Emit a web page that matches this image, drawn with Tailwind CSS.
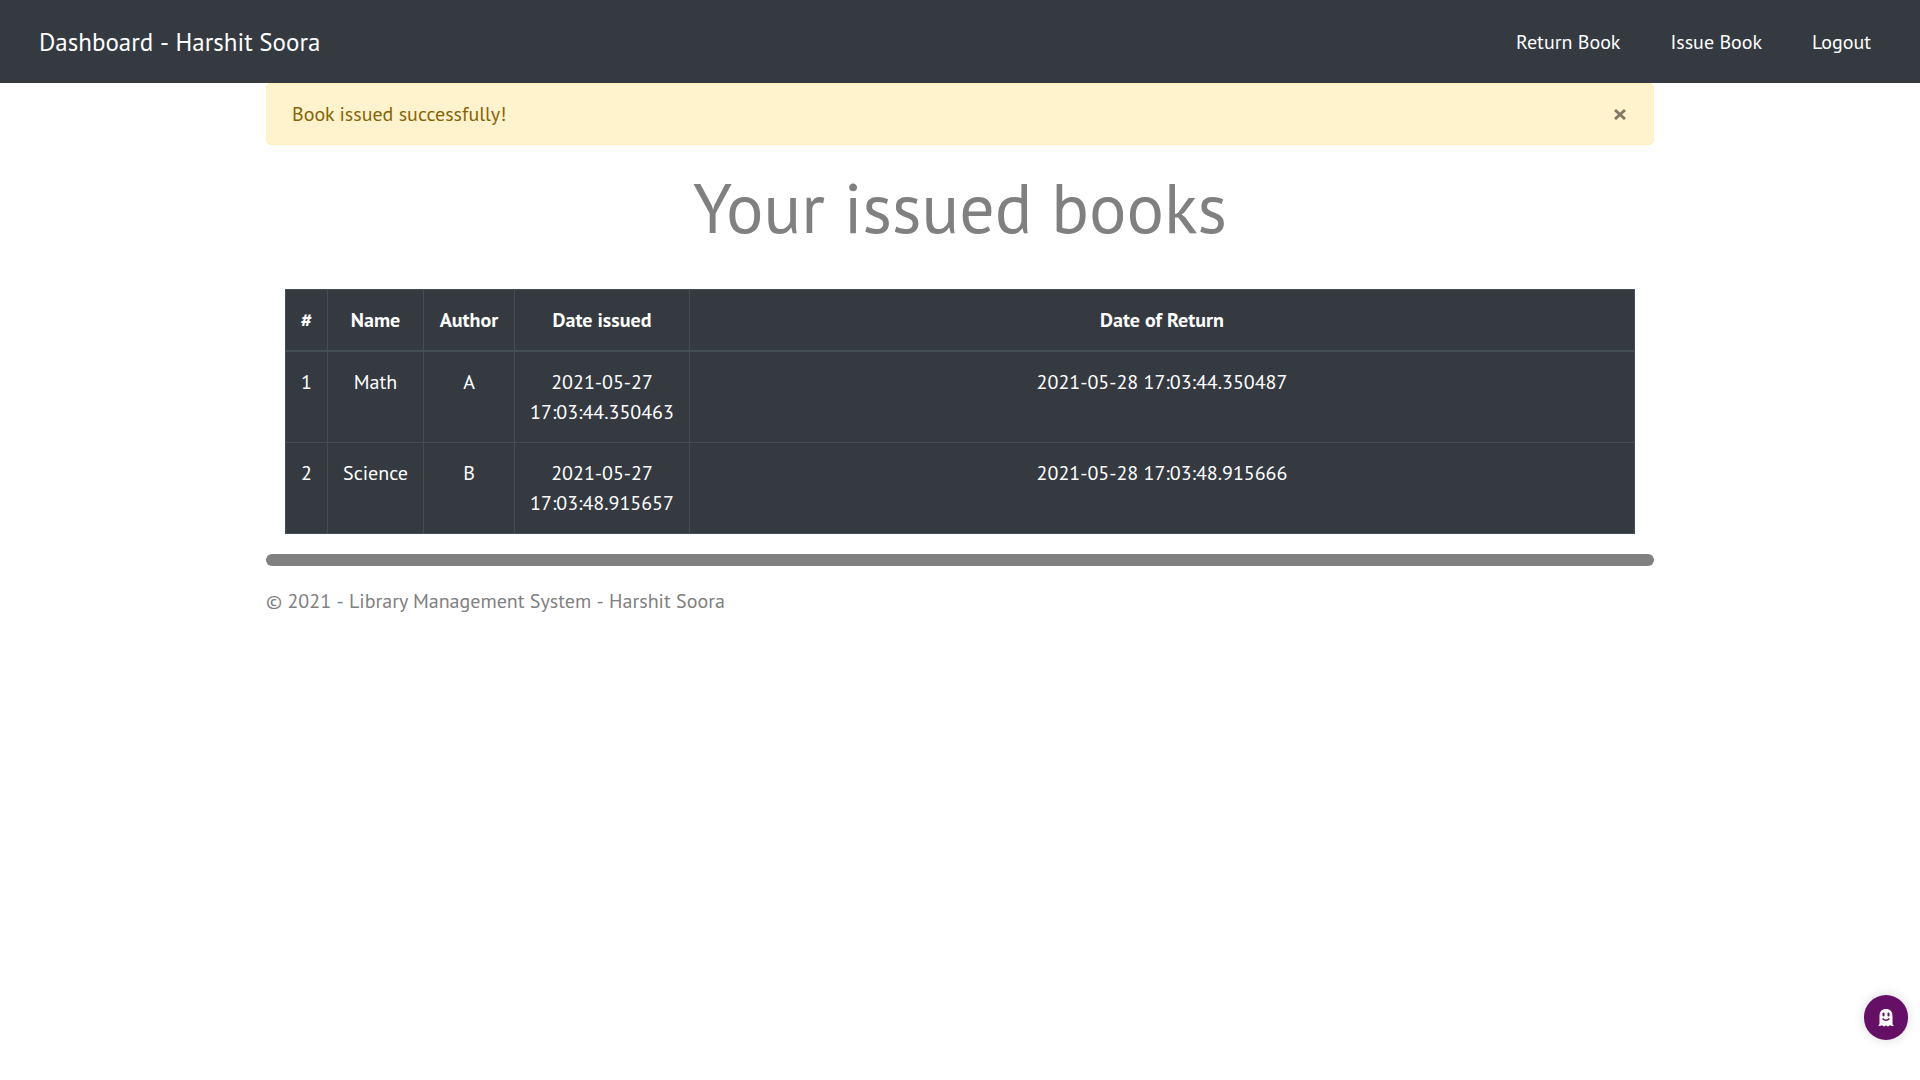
<!DOCTYPE html>
<html lang="en">
<head>
<meta charset="utf-8">
<title>Library Management System</title>
<script src="https://cdn.jsdelivr.net/npm/@tailwindcss/browser@4"></script>
</head>
<body class="min-h-screen bg-white font-['PT_Sans','Noto_Sans',sans-serif] text-[20px]/[30px] text-[#808080]">
<nav class="flex h-[83px] items-center justify-between bg-[#343a40] pr-[49px] pl-[39px] text-white">
  <a href="#" class="text-[25px]/[38px]">Dashboard<span class="[font-kerning:none]"> - </span>Harshit Soora</a>
  <div class="flex gap-[50px]">
    <a href="#">Return Book</a>
    <a href="#">Issue Book</a>
    <a href="#">Logout</a>
  </div>
</nav>
<main class="mx-auto max-w-[1388px]">
  <div role="alert" class="flex items-center justify-between rounded-[5px] border border-[#ffeeba] bg-[#fff3cd] py-[15px] pr-[23px] pl-[25px] text-[#856404]">
    <span>Book issued successfully!</span>
    <button type="button" aria-label="Close" class="flex h-[30px] w-5 items-center justify-center">
      <svg class="size-3" viewBox="0 0 12 12" fill="none" stroke="#807a67" stroke-width="3"><path d="M1 2L11 11M11 2L1 11"/></svg>
    </button>
  </div>
  <h1 class="mt-5 text-center text-[70px]/[84px]">Your issued books</h1>
  <div class="px-[19px] pt-10">
    <table class="w-full border-collapse border border-[#454d55] bg-[#343a40] text-center text-white">
      <thead>
        <tr class="*:border *:border-b-2 *:border-[#454d55] *:px-[14px] *:py-[15px] *:font-bold">
          <th scope="col" class="w-[42px]">#</th>
          <th scope="col" class="w-24">Name</th>
          <th scope="col" class="w-[91px]">Author</th>
          <th scope="col" class="w-[175px]">Date issued</th>
          <th scope="col">Date of Return</th>
        </tr>
      </thead>
      <tbody>
        <tr class="align-top *:border *:border-[#454d55] *:px-[14px] *:py-[15px]">
          <td>1</td><td>Math</td><td>A</td><td>2021-05-27 17:03:44.350463</td><td>2021-05-28 17:03:44.350487</td>
        </tr>
        <tr class="align-top *:border *:border-[#454d55] *:px-[14px] *:py-[15px]">
          <td>2</td><td>Science</td><td>B</td><td>2021-05-27 17:03:48.915657</td><td>2021-05-28 17:03:48.915666</td>
        </tr>
      </tbody>
    </table>
  </div>
  <hr class="mt-5 h-3 rounded-full border-0 bg-[#808080]">
  <footer class="mt-5">© 2021<span class="[font-kerning:none]"> - </span>Library Management System<span class="[font-kerning:none]"> - </span>Harshit Soora</footer>
</main>
<button type="button" aria-label="Open assistant" class="fixed right-3 bottom-10 flex h-[45px] w-11 items-center justify-center rounded-full bg-[#660f66] shadow-[0_0_12px_rgba(0,0,0,0.15)]">
  <svg class="h-[18px] w-4" viewBox="0 0 16 18"><path fill="#fff" d="M1.500 7C1.500 2.500 4 0 8 0s6.500 2.500 6.500 7v7c0 1.500.500 2 1.500 2.500-1.500.700-3 .500-4-.500-1 1.800-3 1.800-4 .300-1 1.500-3 1.500-4-.300-1 1-2.500 1.200-4 .500 1-.500 1.500-1 1.500-2.500z"/><rect x="4.500" y="3.500" width="2" height="4" rx="1" fill="#660f66"/><rect x="9.500" y="3.500" width="2" height="4" rx="1" fill="#660f66"/><path d="M4.500 9.500q3.500 3.500 7 0" fill="none" stroke="#660f66" stroke-width="1.500"/></svg>
</button>
</body>
</html>
